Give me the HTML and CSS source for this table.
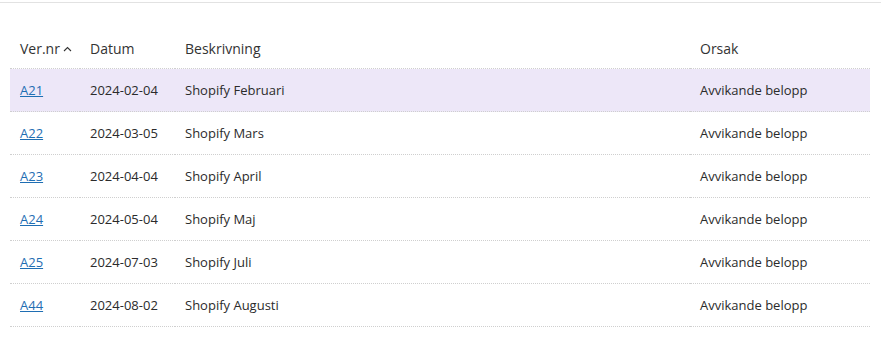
FILE: index.html
```html
<!DOCTYPE html>
<html lang="sv">
<head>
<meta charset="utf-8">
<link rel="stylesheet" href="styles.css">
</head>
<body>
<div class="panel">
  <table class="ver-table">
    <colgroup>
      <col class="c-nr"><col class="c-date"><col class="c-desc"><col class="c-reason">
    </colgroup>
    <thead>
      <tr>
        <th><span class="sortable">Ver.nr<svg class="sort-icon" width="9" height="6" viewBox="0 0 9 6"><path d="M1 5 L4.5 1.5 L8 5" fill="none" stroke="#333" stroke-width="1.1"/></svg></span></th>
        <th>Datum</th>
        <th>Beskrivning</th>
        <th>Orsak</th>
      </tr>
    </thead>
    <tbody>
      <tr class="selected"><td><a href="#">A21</a></td><td>2024-02-04</td><td>Shopify Februari</td><td>Avvikande belopp</td></tr>
      <tr><td><a href="#">A22</a></td><td>2024-03-05</td><td>Shopify Mars</td><td>Avvikande belopp</td></tr>
      <tr><td><a href="#">A23</a></td><td>2024-04-04</td><td>Shopify April</td><td>Avvikande belopp</td></tr>
      <tr><td><a href="#">A24</a></td><td>2024-05-04</td><td>Shopify Maj</td><td>Avvikande belopp</td></tr>
      <tr><td><a href="#">A25</a></td><td>2024-07-03</td><td>Shopify Juli</td><td>Avvikande belopp</td></tr>
      <tr><td><a href="#">A44</a></td><td>2024-08-02</td><td>Shopify Augusti</td><td>Avvikande belopp</td></tr>
    </tbody>
  </table>
</div>
</body>
</html>
```
FILE: styles.css
```css
html, body {
  margin: 0;
  padding: 0;
  background: #fff;
}
body {
  font-family: "Open Sans", "Noto Sans", sans-serif;
  color: #2b2b2b;
}
.panel {
  margin-top: 2px;
  border-top: 1px solid #e2e2e2;
  padding: 27px 11px 0 10px;
}
.ver-table {
  width: 860px;
  border-collapse: collapse;
  table-layout: fixed;
}
.c-nr { width: 70px; }
.c-date { width: 95px; }
.c-desc { width: 515px; }
.c-reason { width: 180px; }
.ver-table th {
  text-align: left;
  font-weight: 400;
  font-size: 14px;
  line-height: 18px;
  padding: 10px 10px 10px 10px;
  color: #333;
  border-bottom: 1px dotted #cfcfcf;
}
.sortable {
  display: inline-flex;
  align-items: center;
  gap: 3px;
  white-space: nowrap;
}
.sort-icon {
  display: block;
  margin-top: -1px;
}
.ver-table td {
  font-size: 13px;
  line-height: 18px;
  height: 43px;
  box-sizing: border-box;
  padding: 0 10px;
  vertical-align: middle;
  border-bottom: 1px dotted #cfcfcf;
  white-space: nowrap;
}
.ver-table tr.selected td {
  background: #ede7f8;
}
.ver-table a {
  color: #1f6eb3;
  text-decoration: underline;
}
```
